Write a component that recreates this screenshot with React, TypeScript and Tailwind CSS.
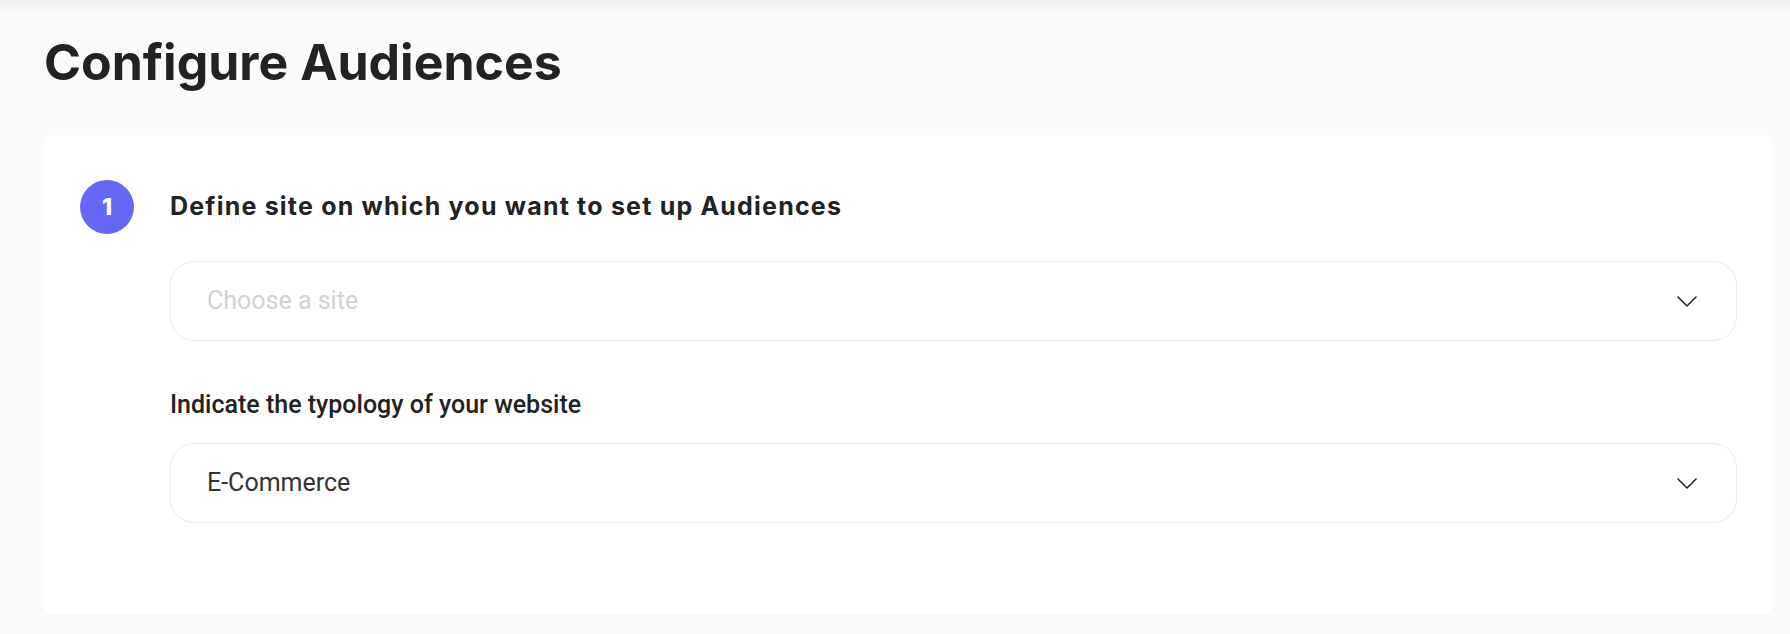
function Chevron() {
  return (
    <svg width="20" height="11" viewBox="0 0 20 11" fill="none" className="text-[#222222]">
      <path d="M1 1l9 9 9-9" stroke="currentColor" strokeWidth="1.5" strokeLinecap="round" strokeLinejoin="round" />
    </svg>
  );
}

function SelectBox({ value, placeholder }: { value?: string; placeholder: string }) {
  return (
    <div className="h-[80px] flex items-center justify-between rounded-[24px] border border-[#ebebeb] bg-white pl-[36px] pr-[39px]">
      <span className={value ? "text-[25px] text-[#333333]" : "text-[25px] text-[#d2d2d2]"}>
        {value ?? placeholder}
      </span>
      <Chevron />
    </div>
  );
}

export default function App() {
  return (
    <div className="min-h-screen bg-[#fafafa] font-['Roboto',sans-serif] text-[#222222]">
      <div className="h-[14px] bg-gradient-to-b from-[#efefef] to-[#fafafa]" />
      <div className="pl-[44px] pr-[18px]">
        <h1 className="pt-[18px] text-[50px] leading-[60px] font-bold font-['Inter',sans-serif]">
          Configure Audiences
        </h1>
        <div className="mt-[43px] rounded-lg bg-white pl-[36px] pr-[35px] pt-[45px] pb-[91px]">
          <div className="flex gap-[36px]">
            <div className="w-[54px] h-[54px] shrink-0 rounded-full bg-[#6767f6] text-white flex items-center justify-center text-[23px] font-extrabold font-['Inter',sans-serif]">
              1
            </div>
            <div className="flex-1">
              <h2 className="h-[54px] flex items-center text-[25px] tracking-[1.2px] font-bold font-['Inter',sans-serif]">
                Define site on which you want to set up Audiences
              </h2>
              <div className="mt-[27px]">
                <SelectBox placeholder="Choose a site" />
              </div>
              <label className="block mt-[49px] text-[25px] leading-[29px] font-medium">
                Indicate the typology of your website
              </label>
              <div className="mt-[24px]">
                <SelectBox value="E-Commerce" placeholder="Choose a typology" />
              </div>
            </div>
          </div>
        </div>
      </div>
    </div>
  );
}
